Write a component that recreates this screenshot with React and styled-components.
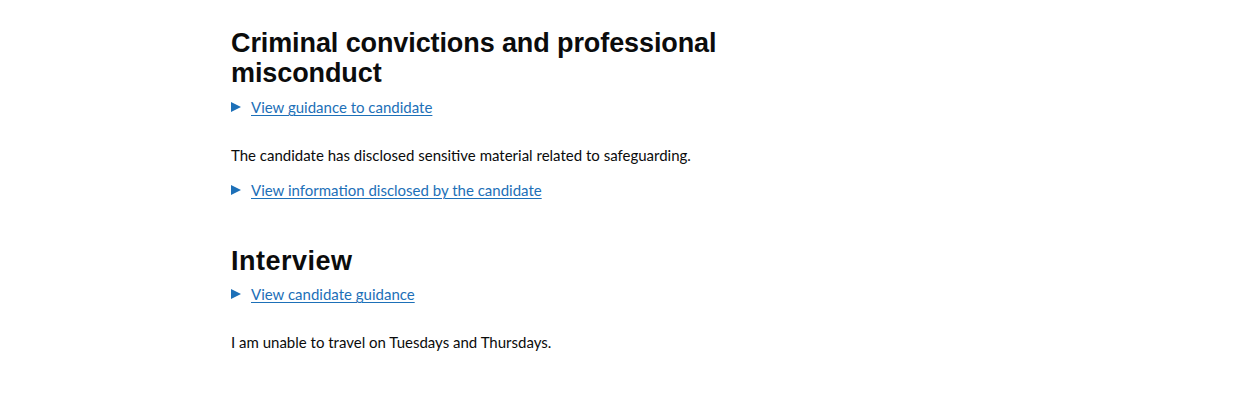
import React from "react";
import styled, { createGlobalStyle } from "styled-components";

const Global = createGlobalStyle`
  html, body { margin: 0; padding: 0; background: #ffffff; }
  body {
    font-family: Lato, "Liberation Sans", Arial, sans-serif;
    color: #0b0c0c;
    -webkit-font-smoothing: antialiased;
  }
`;

const Main = styled.main`
  padding: 28px 0 0 231px;
  width: 520px;
`;

const Section = styled.section`
  margin-bottom: ${(p) => p.$gap || 0}px;
`;

const Heading = styled.h2`
  margin: 0 0 ${(p) => p.$mb ?? 9}px;
  font-family: "Liberation Sans", Arial, sans-serif;
  font-size: 27px;
  line-height: 30px;
  font-weight: 700;
  letter-spacing: ${(p) => p.$ls || 0}px;
  color: #0b0c0c;
`;

const Details = styled.div`
  display: flex;
  margin-bottom: ${(p) => p.$mb || 0}px;
`;

const Summary = styled.a`
  display: flex;
  align-items: center;
  gap: 10px;
  font-size: 15px;
  line-height: 20px;
  color: #1d70b8;
  cursor: pointer;
`;

const Arrow = styled.span`
  width: 0;
  height: 0;
  border-style: solid;
  border-width: 5px 0 5px 10px;
  border-color: transparent transparent transparent #1d70b8;
  flex: none;
`;

const Label = styled.span`
  text-decoration: underline;
  text-underline-offset: 2px;
  text-decoration-thickness: 1px;
`;

const Body = styled.p`
  margin: 0 0 ${(p) => p.$mb || 0}px;
  font-size: 15px;
  line-height: 20px;
  color: #0b0c0c;
`;

function Reveal({ children, mb }) {
  return (
    <Details $mb={mb}>
      <Summary>
        <Arrow />
        <Label>{children}</Label>
      </Summary>
    </Details>
  );
}

export default function App() {
  return (
    <>
      <Global />
      <Main>
        <Section $gap={46}>
          <Heading $ls={-0.1}>Criminal convictions and professional misconduct</Heading>
          <Reveal mb={28}>View guidance to candidate</Reveal>
          <Body $mb={15}>
            The candidate has disclosed sensitive material related to safeguarding.
          </Body>
          <Reveal>View information disclosed by the candidate</Reveal>
        </Section>
        <Section>
          <Heading $ls={0.5} $mb={8}>Interview</Heading>
          <Reveal mb={28}>View candidate guidance</Reveal>
          <Body>I am unable to travel on Tuesdays and Thursdays.</Body>
        </Section>
      </Main>
    </>
  );
}
